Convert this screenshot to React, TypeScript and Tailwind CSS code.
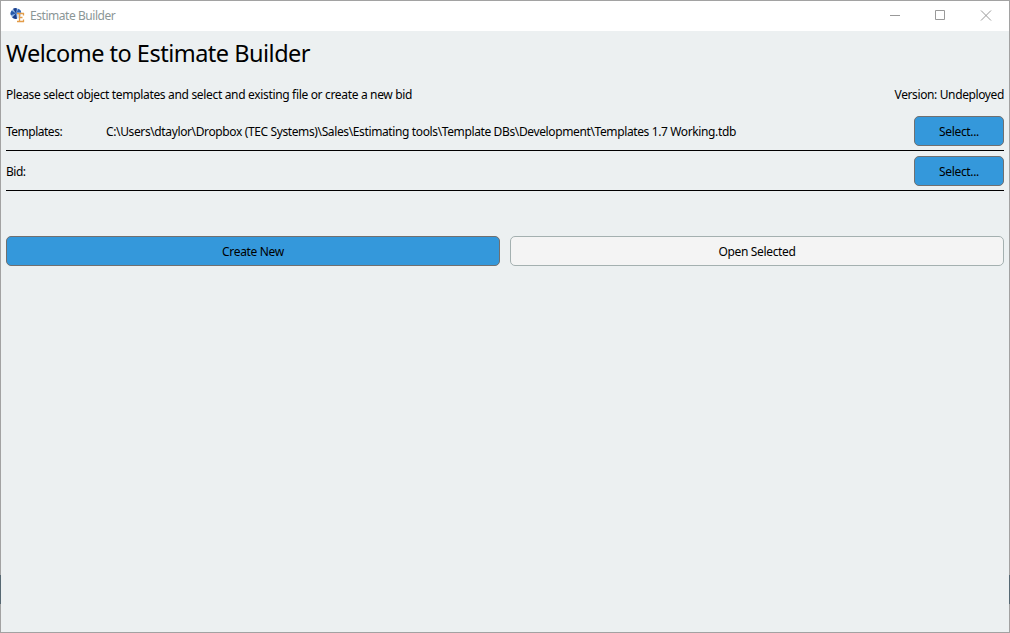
import React from "react";

function AppIcon() {
  return (
    <svg width="18" height="18" viewBox="0 0 18 18" aria-hidden="true">
      <circle cx="7" cy="6.500" r="5.300" fill="#8fb3e0" />
      <path d="M7 6.500 4 1.800Q6 .6 8 1.400Z" fill="#1b3f8c" />
      <path d="M7 6.500 9.500 1.800Q12.300 3.400 12.300 6Z" fill="#2a62b8" />
      <path d="M7 6.500 8 11.800Q5 12.400 3.200 10.500Z" fill="#1b3f8c" />
      <path d="M7 6.500 1.700 8.300Q1 5.500 2.600 3.500Z" fill="#2458aa" />
      <path d="M8 5.500H15.500V15H8Z" fill="#fff" fillOpacity=".55" />
      <path d="M8 6.500H15M8 14.500H15M10.500 6.500V14.500M10.500 10.500H13.500M14.500 6V8.500M14.500 12.500V15" fill="none" stroke="#e39c48" strokeWidth="1.300" />
    </svg>
  );
}

function TitleBar() {
  return (
    <header className="flex h-[30px] shrink-0 items-center justify-between bg-white pl-2 text-[#8b9696]">
      <div className="flex items-center gap-[3px]">
        <AppIcon />
        <span className="text-[12px] leading-4 tracking-[-0.45px] whitespace-nowrap">Estimate Builder</span>
      </div>
      <svg width="137" height="30" viewBox="0 0 137 30" fill="none" stroke="#999999" aria-hidden="true">
        <path d="M18 14.500h10" />
        <path d="M63.500 9.500h9v9h-9z" />
        <path d="M109 9.500l10 10M119 9.500l-10 10" />
      </svg>
    </header>
  );
}

function SelectButton() {
  return (
    <button className="h-[30px] w-[90px] shrink-0 rounded-[5px] border border-[#707070] bg-[#3498db] pt-px text-center">
      <span className="tracking-[-0.33px]">Select...</span>
    </button>
  );
}

export default function App() {
  return (
    <div className="relative flex h-[633px] w-[1010px] flex-col border border-[#a2a2a2] bg-[#ecf0f1] font-['Noto_Sans','Open_Sans',sans-serif] text-[12px] leading-4 whitespace-nowrap text-black">
      <TitleBar />
      <main className="flex flex-col px-[5px]">
        <h1 className="mt-[4px] h-9 text-[23.5px] leading-9 tracking-[-0.5px]">Welcome to Estimate Builder</h1>
        <div className="mt-[16px] flex h-4 justify-between">
          <span className="tracking-[-0.33px]">Please select object templates and select and existing file or create a new bid</span>
          <span className="tracking-[-0.38px]">Version: Undeployed</span>
        </div>
        <div className="mt-[13px] flex h-[35px] items-start border-b border-black">
          <span className="w-[100px] pt-[8px] tracking-[-0.5px]">Templates:</span>
          <span className="flex-1 pt-[8px] tracking-[-0.375px]">C:\Users\dtaylor\Dropbox (TEC Systems)\Sales\Estimating tools\Template DBs\Development\Templates 1.7 Working.tdb</span>
          <SelectButton />
        </div>
        <div className="mt-[5px] flex h-[35px] items-start border-b border-black">
          <span className="flex-1 pt-[8px] tracking-[-0.5px]">Bid:</span>
          <SelectButton />
        </div>
        <div className="mt-[45px] grid grid-cols-2 gap-[10px]">
          <button className="h-[30px] rounded-[5px] border border-[#707070] bg-[#3498db] pt-px"><span className="tracking-[-0.33px]">Create New</span></button>
          <button className="h-[30px] rounded-[5px] border border-[#a4b0b0] bg-[#f4f4f4] pt-px"><span className="tracking-[-0.33px]">Open Selected</span></button>
        </div>
      </main>
      <div className="absolute top-[574px] -left-px h-[29px] w-px bg-[#566872]" />
      <div className="absolute top-[574px] -right-px h-[29px] w-px bg-[#566872]" />
    </div>
  );
}
